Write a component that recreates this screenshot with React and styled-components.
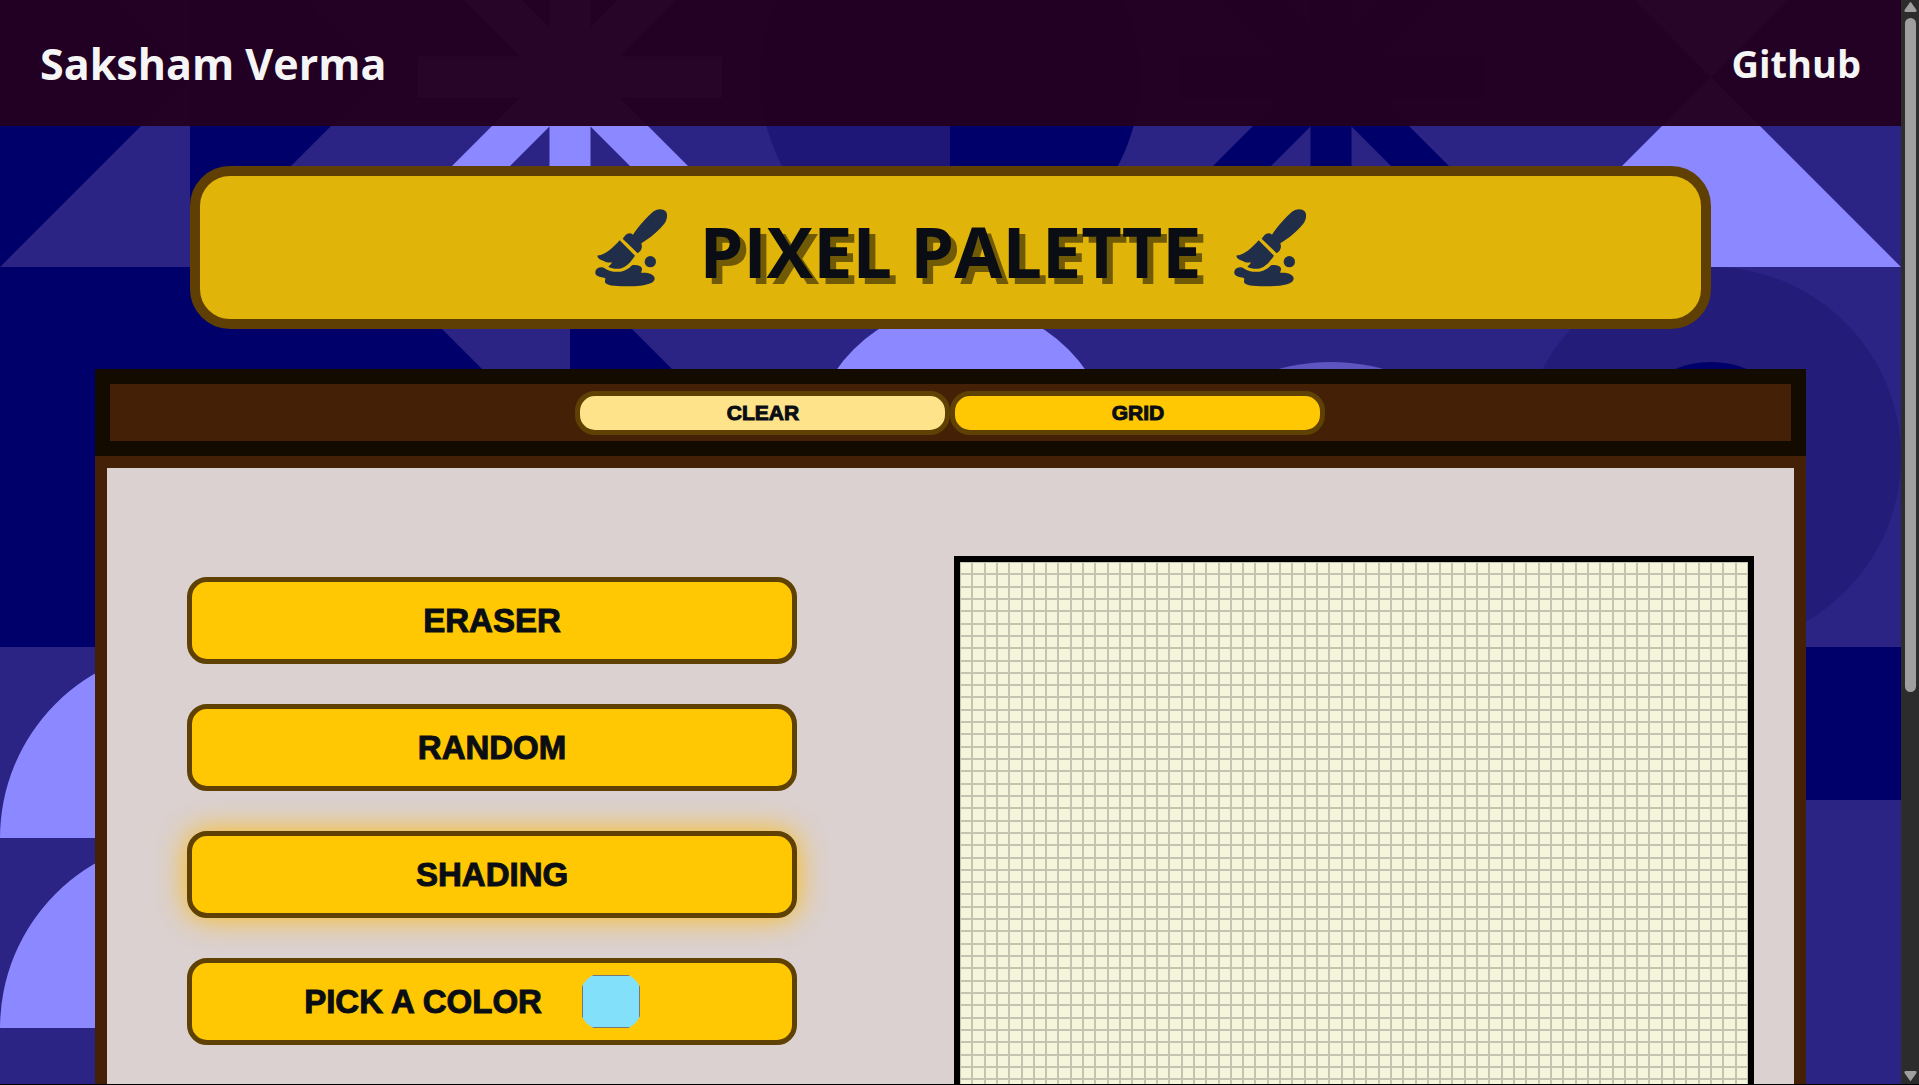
import React, { useState } from "react";
import styled, { createGlobalStyle } from "styled-components";

const GlobalStyle = createGlobalStyle`
  *, *::before, *::after { box-sizing: border-box; }
  body {
    margin: 0;
    background: #000;
    font-family: "Open Sans", "Noto Sans", sans-serif;
    color: #0a0e14;
  }
`;

const Shell = styled.div`
  display: flex;
  height: 100vh;
  border-bottom: 1px solid #000;
`;

const Page = styled.div`
  flex: 1;
  min-width: 0;
  display: grid;
  grid-template-columns: minmax(0, 1fr);
  align-items: start;
  overflow-x: hidden;
  overflow-y: auto;
  scrollbar-width: none;
  background: #2b2484;
`;

const Backdrop = styled.svg`
  grid-area: 1 / 1;
  display: block;
  width: 100%;
`;

const Content = styled.div`
  grid-area: 1 / 1;
  z-index: 1;
  display: flex;
  flex-direction: column;
  align-items: center;
  padding-bottom: 40px;
`;

const Header = styled.header`
  align-self: stretch;
  display: flex;
  align-items: center;
  justify-content: space-between;
  height: 126px;
  padding: 0 40px;
  background: rgba(34, 0, 32, 0.96);
  font-weight: 700;
`;

const Author = styled.span`
  color: #f5f5f5;
  font-size: 43px;
`;

const HeaderLink = styled.a`
  color: #f5f5f5;
  font-size: 38px;
  text-decoration: none;
`;

const Banner = styled.div`
  display: flex;
  align-items: center;
  justify-content: center;
  gap: 30px;
  width: 80%;
  height: 163px;
  margin: 40px 0;
  border: 10px solid #5f3f04;
  border-radius: 40px;
  background: #e1b40a;
`;

const Title = styled.h1`
  margin: 0;
  padding-top: 6px;
  font-size: 70px;
  font-weight: 700;
  line-height: 96px;
  white-space: nowrap;
  text-shadow: 6px 6px 0 rgba(0, 0, 0, 0.5);
`;

const BrushSvg = styled.svg`
  width: 76px;
  height: 80px;
  fill: #212e49;
`;

const Toolbar = styled.div`
  display: flex;
  align-items: center;
  justify-content: center;
  width: 90%;
  height: 87px;
  border: 15px solid #130a00;
  background: #432006;
`;

const Button = styled.button`
  padding: 0;
  border: 5px solid #5f4104;
  border-radius: 20px;
  background: ${(p) => (p.$pale ? "#ffe38a" : "#ffc802")};
  color: #0a0e14;
  font-family: "Liberation Sans", Arial, sans-serif;
  font-weight: 700;
  -webkit-text-stroke: 1px currentColor;
  cursor: pointer;
`;

const BarButton = styled(Button)`
  flex: 0 1 375px;
  height: 44px;
  font-size: 21px;
`;

const ToolButton = styled(Button)`
  display: flex;
  align-items: center;
  justify-content: center;
  width: 100%;
  height: 87px;
  font-size: 33px;
  box-shadow: ${(p) => (p.$active ? "0 0 30px rgba(255, 184, 0, 0.9)" : "none")};
`;

const Panel = styled.main`
  display: flex;
  align-items: flex-start;
  justify-content: space-between;
  gap: 40px;
  width: 90%;
  padding: 88px 40px 88px 80px;
  border: 12px solid #432006;
  background: #dbd1d0;
`;

const Tools = styled.div`
  flex: 0 1 610px;
  display: flex;
  flex-direction: column;
  gap: 40px;
  padding-top: 21px;
`;

const ColorInput = styled.input`
  appearance: none;
  width: 58px;
  height: 53px;
  margin: 0 40px;
  padding: 0;
  border: 0;
  background: none;
  clip-path: inset(-2px round 23px);
  cursor: pointer;

  &::-webkit-color-swatch-wrapper { padding: 0; }
  &::-webkit-color-swatch { border: 1px solid #777; border-radius: 0; }
`;

const Canvas = styled.div`
  flex: 0 1 800px;
  aspect-ratio: 1;
  display: grid;
  grid-template-columns: repeat(64, 1fr);
  grid-template-rows: repeat(64, 1fr);
  border: 6px solid #000;
  background: #f5f5dc;
`;

const Cell = styled.div`
  border: 1px solid #c5c4b0;
`;

const Track = styled.div`
  flex: none;
  display: flex;
  flex-direction: column;
  align-items: center;
  width: 18px;
  padding: 2px 0 3px;
  background: #2c2c2c;
`;

const Thumb = styled.div`
  width: 11px;
  height: 62.5%;
  margin: 6px 0 auto;
  border-radius: 6px;
  background: #9f9f9f;
`;

const Arrow = styled.svg`
  width: 13px;
  height: 10px;
  fill: #9f9f9f;
`;

const NAVY = "#00006a";
const LIGHT = "#8c88ff";

function Star({ cx, cy, color }) {
  return (
    <g fill={color}>
      {[0, 45, 90, 135].map((angle) => (
        <rect
          key={angle}
          x={cx - 152}
          y={cy - 20.5}
          width="304"
          height="41"
          transform={`rotate(${angle} ${cx} ${cy})`}
        />
      ))}
    </g>
  );
}

function Pattern() {
  return (
    <Backdrop viewBox="0 0 1901 1085" aria-hidden="true">
      <rect width="1901" height="1085" fill="#2b2484" />
      <path
        fill={NAVY}
        d="M0 0H114L190 77L0 267ZM190 0H304L380 77L190 267ZM0 267H380L570 457H0ZM570 267L760 457H570ZM0 457H380V647H0ZM1521 647H1901V800H1521Z"
      />
      <Star cx={570} cy={77} color={LIGHT} />
      <path fill="#1e1778" d="M950 -113A190 190 0 0 0 950 267Z" />
      <path fill={NAVY} d="M950 -113A190 190 0 0 1 950 267Z" />
      <Star cx={1331} cy={77} color={NAVY} />
      <path fill={LIGHT} d="M1635 0H1787L1711 77L1901 267H1521L1711 77Z" />
      <circle cx="961" cy="457" r="152" fill={LIGHT} />
      <circle cx="1331" cy="562" r="200" fill="#5d55c0" />
      <circle cx="1711" cy="457" r="190" fill="#231c79" />
      <circle cx="1711" cy="457" r="95" fill={NAVY} />
      <path fill={LIGHT} d="M0 838A190 190 0 0 1 190 648V838ZM0 1028A190 190 0 0 1 190 838V1028Z" />
    </Backdrop>
  );
}

function Brush() {
  return (
    <BrushSvg viewBox="102 84 228 240" aria-hidden="true">
      <path d="M222 164C240 138 264 110 284 94C296 86 312 86 320 94C327 102 325 118 317 130C302 150 272 176 247 190C250 199 249 206 244 213L236 220L191 176L199 166C206 158 215 158 222 164Z" />
      <path d="M182 181L228 227C218 242 208 254 196 261C182 269 162 268 148 260C152 257 156 253 159 247C150 249 142 247 134 243C123 240 116 235 115 228C116 225 120 226 125 225C146 218 162 203 182 181Z" />
      <circle cx="274" cy="245" r="17" />
      <path d="M117 264C124 260 133 261 139 266C151 275 176 279 195 272C206 268 214 262 219 256C231 253 244 256 248 263C252 270 244 275 248 279C260 277 287 281 287 296C286 312 252 319 200 319C164 319 140 316 138 306C137 300 142 296 136 293C126 292 111 290 109 280C108 273 111 267 117 264Z" />
    </BrushSvg>
  );
}

const CELLS = Array.from({ length: 64 * 64 }, (_, i) => i);

export default function App() {
  const [color, setColor] = useState("#82e0fa");

  return (
    <>
      <GlobalStyle />
      <Shell>
        <Page>
          <Pattern />
          <Content>
            <Header>
              <Author>Saksham Verma</Author>
              <HeaderLink href="#github">Github</HeaderLink>
            </Header>
            <Banner>
              <Brush />
              <Title>PIXEL PALETTE</Title>
              <Brush />
            </Banner>
            <Toolbar>
              <BarButton type="button" $pale>CLEAR</BarButton>
              <BarButton type="button">GRID</BarButton>
            </Toolbar>
            <Panel>
              <Tools>
                <ToolButton type="button">ERASER</ToolButton>
                <ToolButton type="button">RANDOM</ToolButton>
                <ToolButton type="button" $active>SHADING</ToolButton>
                <ToolButton as="label" htmlFor="color">
                  PICK A COLOR
                  <ColorInput
                    id="color"
                    type="color"
                    value={color}
                    onChange={(e) => setColor(e.target.value)}
                  />
                </ToolButton>
              </Tools>
              <Canvas>
                {CELLS.map((i) => (
                  <Cell key={i} />
                ))}
              </Canvas>
            </Panel>
          </Content>
        </Page>
        <Track aria-hidden="true">
          <Arrow viewBox="0 0 13 10">
            <path d="M6.500 0Q7 0 7.500 1L12.500 8Q13 10 11.500 10H1.500Q0 10 0.500 8L5.500 1Q6 0 6.500 0Z" />
          </Arrow>
          <Thumb />
          <Arrow viewBox="0 0 13 10">
            <path d="M6.500 10Q7 10 7.500 9L12.500 2Q13 0 11.500 0H1.500Q0 0 0.500 2L5.500 9Q6 10 6.500 10Z" />
          </Arrow>
        </Track>
      </Shell>
    </>
  );
}
